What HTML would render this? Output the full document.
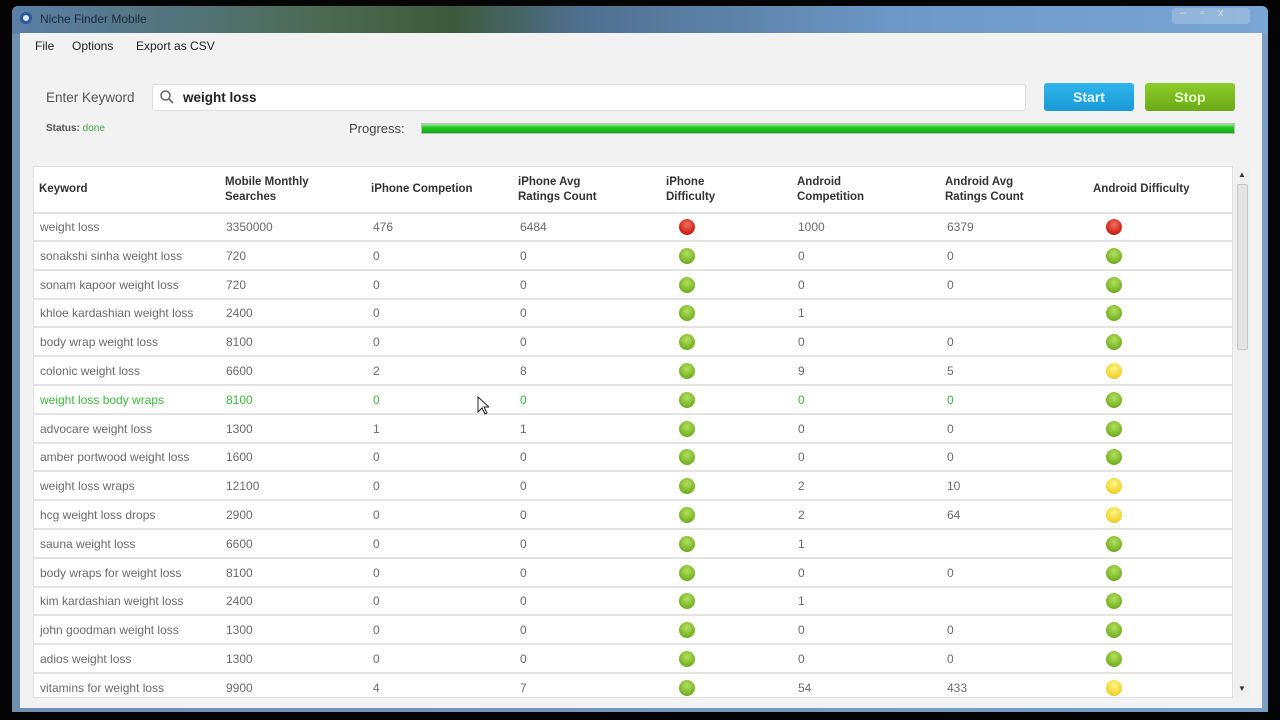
<!DOCTYPE html>
<html><head><meta charset="utf-8"><style>
*{margin:0;padding:0;box-sizing:border-box}
body{width:1280px;height:720px;background:#050505;position:relative;overflow:hidden;font-family:"Liberation Sans",sans-serif}
.a{position:absolute}
.win{left:12px;top:6px;width:1256px;height:706px;background:linear-gradient(90deg,#6f8fb0,#7aa0c8);border-radius:6px 6px 0 0}
.title{left:12px;top:6px;width:1256px;height:28px;background:linear-gradient(90deg,#5b7fa8 0,#4c6a52 25%,#3d5a3a 35%,#4f6f8e 45%,#6c97c6 70%,#7aa6d6 100%);border-radius:6px 6px 0 0}
.client{left:20px;top:33px;width:1242px;height:675px;background:#f2f2f2}
.menu{top:39px;font-size:12px;color:#222}
.txt{font-size:12px;color:#6a6a6a;white-space:nowrap}
.hd{font-size:11.5px;font-weight:bold;color:#333;line-height:15px}
.dot{width:16px;height:16px;border-radius:50%}
.g{background:radial-gradient(circle at 50% 35%,#b4e060,#7cb82a 60%,#62961a)}
.r{background:radial-gradient(circle at 50% 35%,#f07060,#d02a1c 60%,#a81a10)}
.y{background:radial-gradient(circle at 50% 35%,#fff48a,#f2d834 60%,#dcb818)}
.line{height:2px;background:#e4e4e4;left:34px;width:1198px}
</style></head><body>
<div class="a win"></div>
<div class="a title"></div>
<div class="a" style="left:20px;top:12px;width:12px;height:12px;border-radius:50%;background:#dfe8f4;border:3px solid #2a5a9a"></div>
<div class="a" style="left:40px;top:12px;font-size:12px;color:#1a2a3a">Niche Finder Mobile</div>
<div class="a" style="left:1172px;top:8px;width:78px;height:16px;background:rgba(255,255,255,.2);border-radius:3px"></div>
<div class="a" style="left:1180px;top:7px;font-size:11px;color:#ddd;letter-spacing:14px">–▫x</div>
<div class="a client"></div>
<div class="a menu" style="left:35px">File</div>
<div class="a menu" style="left:72px">Options</div>
<div class="a menu" style="left:136px">Export as CSV</div>
<div class="a" style="left:46px;top:90px;font-size:13.5px;color:#555">Enter Keyword</div>
<div class="a" style="left:152px;top:84px;width:874px;height:27px;background:#fff;border:1px solid #ddd;border-radius:3px"></div>
<svg class="a" style="left:159px;top:89px" width="16" height="16"><circle cx="6.5" cy="6.5" r="4.5" fill="none" stroke="#666" stroke-width="1.5"/><path d="M10 10l4 4" stroke="#666" stroke-width="1.8"/></svg>
<div class="a" style="left:183px;top:90px;font-size:13.5px;font-weight:bold;color:#222">weight loss</div>
<div class="a" style="left:1044px;top:83px;width:90px;height:28px;background:linear-gradient(#2fb6ec,#1a9ad6);border-radius:3px;color:#e8f8ff;font-weight:bold;font-size:14px;text-align:center;line-height:28px">Start</div>
<div class="a" style="left:1145px;top:83px;width:90px;height:28px;background:linear-gradient(#8ccc2a,#6aaa16);border-radius:3px;color:#eaffd0;font-weight:bold;font-size:14px;text-align:center;line-height:28px">Stop</div>
<div class="a" style="left:46px;top:123px;font-size:10px;font-weight:bold;color:#555">Status: <span style="color:#4a4;font-weight:normal">done</span></div>
<div class="a" style="left:349px;top:121px;font-size:13px;color:#444">Progress:</div>
<div class="a" style="left:421px;top:123px;width:814px;height:11px;background:linear-gradient(#9ee89e,#1ec81e 40%,#12a812);border:1px solid #bbb"></div>
<div class="a" style="left:33px;top:166px;width:1200px;height:532px;background:#fff;border:1px solid #e0e0e0"></div>
<div class="a" style="left:1234px;top:166px;width:16px;height:532px;background:#f0f0f0"></div>
<div class="a" style="left:1237px;top:184px;width:11px;height:166px;background:#e4e4e4;border:1px solid #c8c8c8;border-radius:2px"></div>
<div class="a" style="left:1238px;top:170px;font-size:8px;color:#333">▲</div>
<div class="a" style="left:1238px;top:684px;font-size:8px;color:#333">▼</div>
<div class="a hd" style="left:39px;top:182px">Keyword</div>
<div class="a hd" style="left:225px;top:175px">Mobile Monthly<br>Searches</div>
<div class="a hd" style="left:371px;top:182px">iPhone Competion</div>
<div class="a hd" style="left:518px;top:175px">iPhone Avg<br>Ratings Count</div>
<div class="a hd" style="left:666px;top:175px">iPhone<br>Difficulty</div>
<div class="a hd" style="left:797px;top:175px">Android<br>Competition</div>
<div class="a hd" style="left:945px;top:175px">Android Avg<br>Ratings Count</div>
<div class="a hd" style="left:1093px;top:182px">Android Difficulty</div>
<div class="a line" style="top:212px;height:2px;background:#e2e2e2"></div>
<div id="rows"></div>
<script>
var d=[["weight loss","3350000","476","6484","r","1000","6379","r"],
["sonakshi sinha weight loss","720","0","0","g","0","0","g"],
["sonam kapoor weight loss","720","0","0","g","0","0","g"],
["khloe kardashian weight loss","2400","0","0","g","1","","g"],
["body wrap weight loss","8100","0","0","g","0","0","g"],
["colonic weight loss","6600","2","8","g","9","5","y"],
["weight loss body wraps","8100","0","0","g","0","0","g"],
["advocare weight loss","1300","1","1","g","0","0","g"],
["amber portwood weight loss","1600","0","0","g","0","0","g"],
["weight loss wraps","12100","0","0","g","2","10","y"],
["hcg weight loss drops","2900","0","0","g","2","64","y"],
["sauna weight loss","6600","0","0","g","1","","g"],
["body wraps for weight loss","8100","0","0","g","0","0","g"],
["kim kardashian weight loss","2400","0","0","g","1","","g"],
["john goodman weight loss","1300","0","0","g","0","0","g"],
["adios weight loss","1300","0","0","g","0","0","g"],
["vitamins for weight loss","9900","4","7","g","54","433","y"]];
var h="";
d.forEach(function(r,i){var c=227+i*28.8;var col=i==6?"color:#3bb83b":"";
var t=function(x,s){return '<div class="a txt" style="left:'+x+'px;top:'+(c-7)+'px;'+col+'">'+s+'</div>'};
h+=t(40,r[0])+t(226,r[1])+t(373,r[2])+t(520,r[3])+t(798,r[5])+t(947,r[6]);
h+='<div class="a dot '+r[4]+'" style="left:679px;top:'+(c-8)+'px"></div>';
h+='<div class="a dot '+r[7]+'" style="left:1106px;top:'+(c-8)+'px"></div>';
if(i<16)h+='<div class="a line" style="top:'+Math.round(c+13)+'px"></div>';});
document.getElementById("rows").innerHTML=h;
</script>
<svg class="a" style="left:477px;top:396px" width="12" height="20"><path d="M1 1v15l4-4 3 6 2-1-3-6h5z" fill="#fff" stroke="#222"/></svg>
</body></html>
